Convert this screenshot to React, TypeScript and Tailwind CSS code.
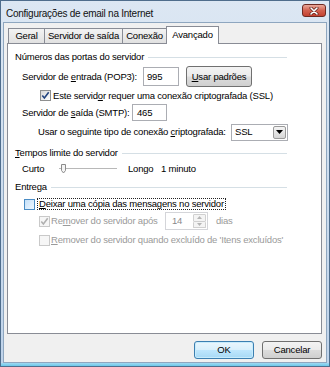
import React from "react";

const U = ({ children }: { children: React.ReactNode }) => (
  <span className="underline underline-offset-[1px] decoration-[1px]">{children}</span>
);

function Check({ checked, disabled, hover }: { checked?: boolean; disabled?: boolean; hover?: boolean }) {
  const cls = disabled
    ? "border-[#c9c9c9] bg-[#f6f6f6]"
    : hover
    ? "border-[#4a8cc4] bg-gradient-to-br from-[#c4e0f8] to-[#eef7ff]"
    : "border-[#8e8f8f] bg-gradient-to-br from-[#d8d8d8] to-[#ffffff]";
  return (
    <div className={`w-[11px] h-[11px] shrink-0 border flex items-center justify-center ${cls}`}>
      {checked && (
        <svg width="9" height="9" viewBox="0 0 9 9">
          <path
            d="M1.3 4.4 L3.4 6.9 L7.7 1.3"
            stroke={disabled ? "#b0b0b0" : "#22437e"}
            strokeWidth="1.6"
            fill="none"
          />
        </svg>
      )}
    </div>
  );
}

function Group({ children }: { children: React.ReactNode }) {
  return (
    <div className="flex items-center h-[14px] w-[272px]">
      <span className="whitespace-nowrap">{children}</span>
      <div className="flex-1 h-px bg-[#d5dfe5] ml-[4px]" />
    </div>
  );
}

function Tab({ label, w, selected, last }: { label: string; w: string; selected?: boolean; last?: boolean }) {
  return (
    <div
      className={`${w} flex items-center justify-center border-l border-t border-[#898c95] ${
        last ? "border-r" : ""
      } ${
        selected
          ? "h-[18px] -mb-px bg-white relative z-10 pb-[2px]"
          : "h-[15px] bg-gradient-to-b from-[#f3f3f3] to-[#e1e1e1]"
      }`}
    >
      <span className="whitespace-nowrap">{label}</span>
    </div>
  );
}

export default function App() {
  return (
    <div className="w-[330px] h-[367px] border border-[#4f6d8c] bg-gradient-to-b from-[#dce7f3] to-[#bfd3ea] flex flex-col overflow-hidden font-['Liberation_Sans',Arial,sans-serif] text-[9.5px] tracking-[-0.2px] text-black leading-none">
      {/* title bar */}
      <div className="h-[21px] flex items-start pl-[5px] pr-[3px] shrink-0">
        <span className="text-[10px] tracking-[-0.25px] mt-[8px] whitespace-nowrap text-[#111]">
          Configurações de email na Internet
        </span>
        <div className="ml-auto mt-[3px] w-[24px] h-[13px] rounded-[3px] border border-[#6e2a22] bg-gradient-to-b from-[#e9a99b] via-[#d2604f] to-[#c4412f] flex items-center justify-center">
          <svg width="10" height="8" viewBox="0 0 10 8">
            <path d="M2 1 L8 7 M8 1 L2 7" stroke="#5a2019" strokeWidth="3" strokeLinecap="round" />
            <path d="M2 1 L8 7 M8 1 L2 7" stroke="#ffffff" strokeWidth="1.6" strokeLinecap="round" />
          </svg>
        </div>
      </div>

      {/* body */}
      <div className="flex-1 mx-[2px] bg-[#f0f0f0] border border-[#8ea6bf] flex flex-col pl-[3px] pr-[4px] pt-[3px]">
        {/* tabs */}
        <div className="flex items-end h-[17px] pl-[1px] relative z-10">
          <Tab label="Geral" w="w-[36px]" />
          <Tab label="Servidor de saída" w="w-[78px]" />
          <Tab label="Conexão" w="w-[44px]" />
          <Tab label="Avançado" w="w-[53px]" selected last />
        </div>

        {/* panel */}
        <div className="h-[291px] bg-white border border-[#898c95] pl-[7px] flex flex-col">
          <div className="mt-[6px]">
            <Group>Números das portas do servidor</Group>
          </div>

          <div className="flex items-center h-[21px] mt-[2px] pl-[7px]">
            <span className="w-[121px] whitespace-nowrap">
              Servidor de <U>e</U>ntrada (POP3):
            </span>
            <div className="w-[36px] h-[19px] border border-[#abadb3] bg-white flex items-center pl-[3px]">995</div>
            <div className="ml-[7px] w-[66px] h-[21px] rounded-[3px] border border-[#707070] bg-[linear-gradient(#f3f3f3_0%,#ebebeb_48%,#dcdcdc_52%,#cfcfcf_100%)] flex items-center justify-center">
              <span>
                <U>U</U>sar padrões
              </span>
            </div>
          </div>

          <div className="flex items-center h-[17px] pl-[25px]">
            <Check checked />
            <span className="ml-[2px] whitespace-nowrap">
              Este servid<U>o</U>r requer uma conexão criptografada (SSL)
            </span>
          </div>

          <div className="flex items-center h-[17px] pl-[7px]">
            <span className="w-[110px] whitespace-nowrap">
              Servidor de <U>s</U>aída (SMTP):
            </span>
            <div className="w-[35px] h-[17px] border border-[#abadb3] bg-white flex items-center pl-[4px]">465</div>
          </div>

          <div className="flex items-center h-[18px] mt-[2px] pl-[23px]">
            <span className="w-[193px] whitespace-nowrap">
              Usar o seguinte tipo de conexão <U>c</U>riptografada:
            </span>
            <div className="w-[57px] h-[17px] border border-[#abadb3] bg-white flex items-center pl-[3px] pr-[1px]">
              <span>SSL</span>
              <div className="ml-auto w-[13px] h-[13px] border border-[#9a9a9a] rounded-[2px] bg-gradient-to-b from-[#f4f4f4] to-[#d6d6d6] flex items-center justify-center">
                <svg width="7" height="4" viewBox="0 0 7 4">
                  <path d="M0 0 H7 L3.5 4 Z" fill="#000" />
                </svg>
              </div>
            </div>
          </div>

          <div className="mt-[5px]">
            <Group>
              <U>T</U>empos limite do servidor
            </Group>
          </div>

          <div className="flex items-center h-[16px] mt-[1px] pl-[7px]">
            <span className="w-[35px]">Curto</span>
            <div className="w-[60px] h-[12px] relative">
              <div className="absolute left-[2px] right-0 top-[5px] h-[2px] border-t border-[#b8b8b8] border-b border-b-[#ffffff] bg-[#e6e6e6]" />
              <svg className="absolute left-[3px] top-[1px]" width="7" height="10" viewBox="0 0 7 10">
                <path d="M1.5 0.5 H5.5 V6.5 L3.5 9 L1.5 6.5 Z" fill="#f4f4f4" stroke="#8c8c8c" strokeWidth="1" />
              </svg>
            </div>
            <span className="ml-[11px] w-[33px]">Longo</span>
            <span className="whitespace-nowrap">1 minuto</span>
          </div>

          <div className="mt-[3px]">
            <Group>Entrega</Group>
          </div>

          <div className="flex items-center h-[16px] mt-[2px] pl-[9px]">
            <Check hover />
            <span className="ml-[2px] h-[12px] px-[1px] border border-dotted border-[#222] flex items-center whitespace-nowrap">
              <U>D</U>eixar uma cópia das mensagens no servidor
            </span>
          </div>

          <div className="flex items-center h-[18px] pl-[24px] text-[#9a9a9a]">
            <Check checked disabled />
            <span className="ml-[1px] w-[114px] whitespace-nowrap">
              Re<U>m</U>over do servidor após
            </span>
            <div className="w-[43px] h-[18px] border border-[#d4d5d9] bg-white flex items-center pl-[6px] pr-[1px]">
              <span className="text-[#8a8a8a]">14</span>
              <div className="ml-auto w-[13px] h-[14px] flex flex-col">
                <div className="flex-1 border border-[#d0d0d0] rounded-[1px] bg-[#f4f4f4] flex items-center justify-center">
                  <svg width="5" height="3" viewBox="0 0 5 3">
                    <path d="M0 3 H5 L2.5 0 Z" fill="#b5b5b5" />
                  </svg>
                </div>
                <div className="flex-1 border border-t-0 border-[#d0d0d0] rounded-[1px] bg-[#f4f4f4] flex items-center justify-center">
                  <svg width="5" height="3" viewBox="0 0 5 3">
                    <path d="M0 0 H5 L2.5 3 Z" fill="#b5b5b5" />
                  </svg>
                </div>
              </div>
            </div>
            <span className="ml-[8px]">dias</span>
          </div>

          <div className="flex items-center h-[18px] mt-[1px] pl-[24px] text-[#9a9a9a]">
            <Check disabled />
            <span className="ml-[1px] whitespace-nowrap">
              <U>R</U>emover do servidor quando excluído de &apos;Itens excluídos&apos;
            </span>
          </div>
        </div>

        {/* buttons */}
        <div className="flex justify-end gap-[8px] h-[18px] mt-[7px]">
          <div className="w-[60px] h-[18px] rounded-[3px] border border-[#3c7fb1] bg-[linear-gradient(#eaf6fd_0%,#d9f0fc_48%,#bee6fd_52%,#a7d9f5_100%)] flex items-center justify-center shadow-[inset_0_0_0_1px_#c8ecfc]">
            OK
          </div>
          <div className="w-[60px] h-[18px] rounded-[3px] border border-[#707070] bg-[linear-gradient(#f3f3f3_0%,#ebebeb_48%,#dcdcdc_52%,#cfcfcf_100%)] flex items-center justify-center">
            Cancelar
          </div>
        </div>
      </div>

      <div className="h-[3px] shrink-0 bg-gradient-to-b from-[#9fd9f1] to-[#69c8ea]" />
    </div>
  );
}
